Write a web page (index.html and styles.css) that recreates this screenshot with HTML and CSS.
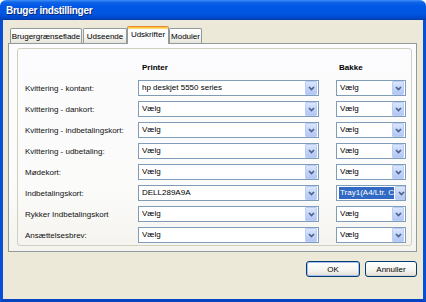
FILE: index.html
```html
<!DOCTYPE html>
<html lang="da">
<head>
<meta charset="utf-8">
<title>Bruger indstillinger</title>
<link rel="stylesheet" href="styles.css">
</head>
<body>
<div class="window">
  <div class="titlebar"><span class="title">Bruger indstillinger</span></div>
  <div class="frame">
    <div class="tabs">
      <div class="tab tab-a">Brugergrænseflade</div>
      <div class="tab tab-b">Udseende</div>
      <div class="tab tab-c tab-active">Udskrifter</div>
      <div class="tab tab-d">Moduler</div>
    </div>
    <div class="panel">
      <div class="group">
        <div class="grid head-row">
          <div></div>
          <div class="head">Printer</div>
          <div class="head">Bakke</div>
        </div>
        <div class="grid rows">
          <div class="label">Kvittering - kontant:</div>
          <div class="select"><span class="value">hp deskjet 5550 series</span><span class="arrow"><svg width="7" height="5" viewBox="0 0 7 5"><polyline points="1,1 3.5,3.6 6,1" fill="none" stroke="#4D6185" stroke-width="1.6"/></svg></span></div>
          <div class="select"><span class="value">Vælg</span><span class="arrow"><svg width="7" height="5" viewBox="0 0 7 5"><polyline points="1,1 3.5,3.6 6,1" fill="none" stroke="#4D6185" stroke-width="1.6"/></svg></span></div>

          <div class="label">Kvittering - dankort:</div>
          <div class="select"><span class="value">Vælg</span><span class="arrow"><svg width="7" height="5" viewBox="0 0 7 5"><polyline points="1,1 3.5,3.6 6,1" fill="none" stroke="#4D6185" stroke-width="1.6"/></svg></span></div>
          <div class="select"><span class="value">Vælg</span><span class="arrow"><svg width="7" height="5" viewBox="0 0 7 5"><polyline points="1,1 3.5,3.6 6,1" fill="none" stroke="#4D6185" stroke-width="1.6"/></svg></span></div>

          <div class="label">Kvittering - indbetalingskort:</div>
          <div class="select"><span class="value">Vælg</span><span class="arrow"><svg width="7" height="5" viewBox="0 0 7 5"><polyline points="1,1 3.5,3.6 6,1" fill="none" stroke="#4D6185" stroke-width="1.6"/></svg></span></div>
          <div class="select"><span class="value">Vælg</span><span class="arrow"><svg width="7" height="5" viewBox="0 0 7 5"><polyline points="1,1 3.5,3.6 6,1" fill="none" stroke="#4D6185" stroke-width="1.6"/></svg></span></div>

          <div class="label">Kvittering - udbetaling:</div>
          <div class="select"><span class="value">Vælg</span><span class="arrow"><svg width="7" height="5" viewBox="0 0 7 5"><polyline points="1,1 3.5,3.6 6,1" fill="none" stroke="#4D6185" stroke-width="1.6"/></svg></span></div>
          <div class="select"><span class="value">Vælg</span><span class="arrow"><svg width="7" height="5" viewBox="0 0 7 5"><polyline points="1,1 3.5,3.6 6,1" fill="none" stroke="#4D6185" stroke-width="1.6"/></svg></span></div>

          <div class="label">Mødekort:</div>
          <div class="select"><span class="value">Vælg</span><span class="arrow"><svg width="7" height="5" viewBox="0 0 7 5"><polyline points="1,1 3.5,3.6 6,1" fill="none" stroke="#4D6185" stroke-width="1.6"/></svg></span></div>
          <div class="select"><span class="value">Vælg</span><span class="arrow"><svg width="7" height="5" viewBox="0 0 7 5"><polyline points="1,1 3.5,3.6 6,1" fill="none" stroke="#4D6185" stroke-width="1.6"/></svg></span></div>

          <div class="label">Indbetalingskort:</div>
          <div class="select"><span class="value">DELL289A9A</span><span class="arrow"><svg width="7" height="5" viewBox="0 0 7 5"><polyline points="1,1 3.5,3.6 6,1" fill="none" stroke="#4D6185" stroke-width="1.6"/></svg></span></div>
          <div class="select"><span class="value value-selected">Tray1(A4/Ltr. C</span><span class="arrow"><svg width="7" height="5" viewBox="0 0 7 5"><polyline points="1,1 3.5,3.6 6,1" fill="none" stroke="#4D6185" stroke-width="1.6"/></svg></span></div>

          <div class="label">Rykker Indbetalingskort</div>
          <div class="select"><span class="value">Vælg</span><span class="arrow"><svg width="7" height="5" viewBox="0 0 7 5"><polyline points="1,1 3.5,3.6 6,1" fill="none" stroke="#4D6185" stroke-width="1.6"/></svg></span></div>
          <div class="select"><span class="value">Vælg</span><span class="arrow"><svg width="7" height="5" viewBox="0 0 7 5"><polyline points="1,1 3.5,3.6 6,1" fill="none" stroke="#4D6185" stroke-width="1.6"/></svg></span></div>

          <div class="label">Ansættelsesbrev:</div>
          <div class="select"><span class="value">Vælg</span><span class="arrow"><svg width="7" height="5" viewBox="0 0 7 5"><polyline points="1,1 3.5,3.6 6,1" fill="none" stroke="#4D6185" stroke-width="1.6"/></svg></span></div>
          <div class="select"><span class="value">Vælg</span><span class="arrow"><svg width="7" height="5" viewBox="0 0 7 5"><polyline points="1,1 3.5,3.6 6,1" fill="none" stroke="#4D6185" stroke-width="1.6"/></svg></span></div>
        </div>
      </div>
    </div>
    <div class="buttons">
      <div class="button button-default">OK</div>
      <div class="button">Annuller</div>
    </div>
  </div>
</div>
</body>
</html>
```
FILE: styles.css
```css
* { box-sizing: border-box; }
html, body { margin: 0; padding: 0; background: #ffffff; }
body {
  font-family: "Liberation Sans", Arial, sans-serif;
  font-size: 8px;
  color: #000;
}
.window {
  width: 426px;
  height: 302px;
  display: flex;
  flex-direction: column;
}
.titlebar {
  height: 20px;
  flex: none;
  border-radius: 6px 6px 0 0;
  background: linear-gradient(#3d8ff7 0%, #0f63e6 12%, #0058e6 30%, #0055e0 70%, #0048c8 90%, #003aa8 100%);
  display: flex;
  align-items: center;
  padding-left: 6px;
}
.title {
  color: #ffffff;
  font-weight: bold;
  font-size: 10px;
  letter-spacing: -0.3px;
  text-shadow: 1px 1px 0 #0a2a7a;
}
.frame {
  flex: 1;
  display: flex;
  flex-direction: column;
  background: #ECE9D8;
  border-left: 3px solid #0750d6;
  border-right: 3px solid #0750d6;
  border-bottom: 3px solid #0745c0;
}
.tabs {
  display: flex;
  align-items: flex-start;
  height: 17px;
  margin-top: 6px;
  padding-left: 7px;
}
.tab {
  height: 15px;
  margin-top: 2px;
  margin-right: 1px;
  border: 1px solid #919B9C;
  border-bottom: none;
  border-radius: 2px 2px 0 0;
  background: linear-gradient(#ffffff, #f3f3ef 60%, #e6e4dc);
  display: flex;
  align-items: center;
  justify-content: center;
  white-space: nowrap;
}
.tab-a { width: 72px; }
.tab-b { width: 44px; }
.tab-c { width: 42px; }
.tab-d { width: 33px; }
.tab-active {
  position: relative;
  z-index: 1;
  height: 18px;
  margin-top: 0;
  margin-left: -1px;
  margin-right: 0;
  background: #fcfcfe;
  border-top: 1px solid #e68b2c;
  box-shadow: inset 0 1px 0 #ffc73c, inset 0 2px 0 #fbd97a;
  padding-bottom: 2px;
}
.panel {
  margin: 0 6px 0 5px;
  border: 1px solid #919B9C;
  background: linear-gradient(#fcfcfe 0%, #fbfbfa 70%, #f4f3ee 100%);
  padding: 4px 4px 5px 8px;
}
.group {
  border: 1px solid #d0d0bf;
  border-radius: 3px;
  padding: 12px 4px 2px 7px;
}
.grid {
  display: grid;
  grid-template-columns: 96px 181px 70px;
  column-gap: 17px;
}
.head-row {
  height: 12px;
  margin-bottom: 7px;
  align-items: center;
}
.head {
  font-weight: bold;
  padding-left: 4px;
}
.head + .head { padding-left: 3px; }
.rows {
  row-gap: 5px;
  align-items: center;
}
.label {
  white-space: nowrap;
  color: #111;
}
.select {
  height: 16px;
  border: 1px solid #7F9DB9;
  background: #ffffff;
  display: flex;
  align-items: center;
  padding: 0 1px 0 3px;
  overflow: hidden;
}
.value {
  flex: 1;
  white-space: nowrap;
  overflow: hidden;
  line-height: 12px;
}
.value-selected {
  flex: none;
  width: 55px;
  margin-left: -1px;
  padding-left: 1px;
  background: #316AC5;
  color: #ffffff;
  margin-right: 1px;
}
.arrow {
  flex: none;
  width: 12px;
  height: 14px;
  border: 1px solid #b9cdf7;
  border-radius: 1px;
  background: linear-gradient(#dce7fd, #c3d4fa 50%, #b3c7f4);
  display: flex;
  align-items: center;
  justify-content: center;
}
.arrow svg { display: block; }
.buttons {
  display: flex;
  justify-content: flex-end;
  gap: 5px;
  margin-top: 9px;
  margin-right: 6px;
}
.button {
  width: 52px;
  height: 16px;
  border: 1px solid #003C74;
  border-radius: 3px;
  background: linear-gradient(#ffffff, #f4f4f0 60%, #e6e3da 90%, #d6d0c5);
  display: flex;
  align-items: center;
  justify-content: center;
}
.button-default {
  width: 54px;
  box-shadow: inset 0 0 0 1px #a9c0ee;
}
```
